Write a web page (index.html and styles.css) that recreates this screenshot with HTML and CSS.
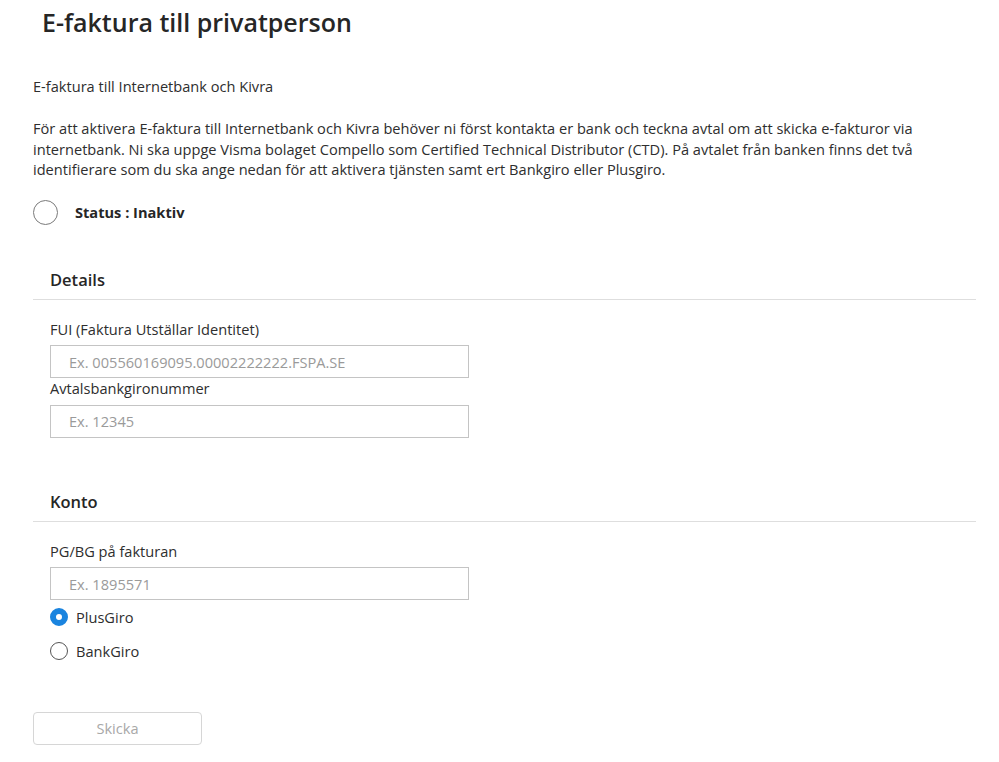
FILE: index.html
```html
<!DOCTYPE html>
<html lang="sv">
<head>
<meta charset="utf-8">
<title>E-faktura till privatperson</title>
<link rel="stylesheet" href="styles.css">
</head>
<body>
<div class="page">
  <h1 class="title">E-faktura till privatperson</h1>
  <p class="intro">E-faktura till Internetbank och Kivra</p>
  <p class="desc">För att aktivera E-faktura till Internetbank och Kivra behöver ni först kontakta er bank och teckna avtal om att skicka e-fakturor via internetbank. Ni ska uppge Visma bolaget Compello som Certified Technical Distributor (CTD). På avtalet från banken finns det två identifierare som du ska ange nedan för att aktivera tjänsten samt ert Bankgiro eller Plusgiro.</p>
  <div class="status">
    <span class="status-dot"></span>
    <span class="status-text">Status : Inaktiv</span>
  </div>

  <section class="section section-details">
    <div class="section-head"><h2>Details</h2></div>
    <div class="fields">
      <label class="label">FUI (Faktura Utställar Identitet)</label>
      <input class="input" type="text" placeholder="Ex. 005560169095.00002222222.FSPA.SE">
      <label class="label">Avtalsbankgironummer</label>
      <input class="input" type="text" placeholder="Ex. 12345">
    </div>
  </section>

  <section class="section section-konto">
    <div class="section-head"><h2>Konto</h2></div>
    <div class="fields">
      <label class="label">PG/BG på fakturan</label>
      <input class="input" type="text" placeholder="Ex. 1895571">
      <div class="radio-row first"><span class="radio checked"></span><span>PlusGiro</span></div>
      <div class="radio-row second"><span class="radio"></span><span>BankGiro</span></div>
    </div>
  </section>

  <button class="btn" type="button" disabled>Skicka</button>
</div>
</body>
</html>
```

FILE: styles.css
```css
html, body {
  margin: 0;
  padding: 0;
  background: #ffffff;
}
body {
  font-family: "Open Sans", "Liberation Sans", sans-serif;
  color: #2e2e2e;
  font-size: 14.6px;
  line-height: 20.5px;
}
.page {
  padding: 0 23px 40px 33px;
}
.title {
  margin: 0;
  padding: 5px 0 0 9px;
  font-size: 25px;
  line-height: 34px;
  font-weight: 600;
  color: #262626;
}
.intro {
  margin: 37px 0 0 0;
}
.desc {
  margin: 21.5px 0 0 0;
}
.status {
  display: flex;
  align-items: center;
  gap: 17px;
  height: 25px;
  margin-top: 20px;
}
.status-dot {
  width: 23px;
  height: 23px;
  border: 1px solid #7a7a7a;
  border-radius: 50%;
  flex: none;
}
.status-text {
  font-weight: 700;
  color: #262626;
}
.section-details {
  margin-top: 44px;
}
.section-konto {
  margin-top: 53px;
}
.section-head {
  border-bottom: 1px solid #dedede;
  padding: 0 0 8px 17px;
}
.section-head h2 {
  margin: 0;
  font-size: 16.5px;
  line-height: 22px;
  font-weight: 600;
  color: #262626;
}
.fields {
  padding: 19px 0 0 17px;
  display: flex;
  flex-direction: column;
  align-items: flex-start;
}
.label {
  display: block;
  margin-bottom: 6px;
}
.input {
  box-sizing: border-box;
  width: 419px;
  height: 33px;
  border: 1px solid #c4c4c4;
  border-radius: 0;
  padding: 0 18px;
  margin: 0;
  font-family: "Open Sans", "Liberation Sans", sans-serif;
  font-size: 14.6px;
  color: #2e2e2e;
  background: #ffffff;
  outline: none;
}
.input::placeholder {
  color: #9a9a9a;
}
.radio-row {
  display: flex;
  align-items: center;
  gap: 8px;
  height: 20.5px;
}
.radio-row.first {
  margin-top: 7px;
}
.radio-row.second {
  margin-top: 13px;
}
.radio {
  box-sizing: border-box;
  width: 18px;
  height: 18px;
  border-radius: 50%;
  border: 1px solid #555555;
  background: #ffffff;
  flex: none;
}
.radio.checked {
  border: 6px solid #1a84df;
  background: #ffffff;
}
.btn {
  display: block;
  margin-top: 51px;
  box-sizing: border-box;
  width: 169px;
  height: 33px;
  border: 1px solid #d6d6d6;
  border-radius: 4px;
  background: #ffffff;
  font-family: "Open Sans", "Liberation Sans", sans-serif;
  font-size: 14.6px;
  line-height: 29px;
  color: #a8a8a8;
  padding: 0;
}
```
